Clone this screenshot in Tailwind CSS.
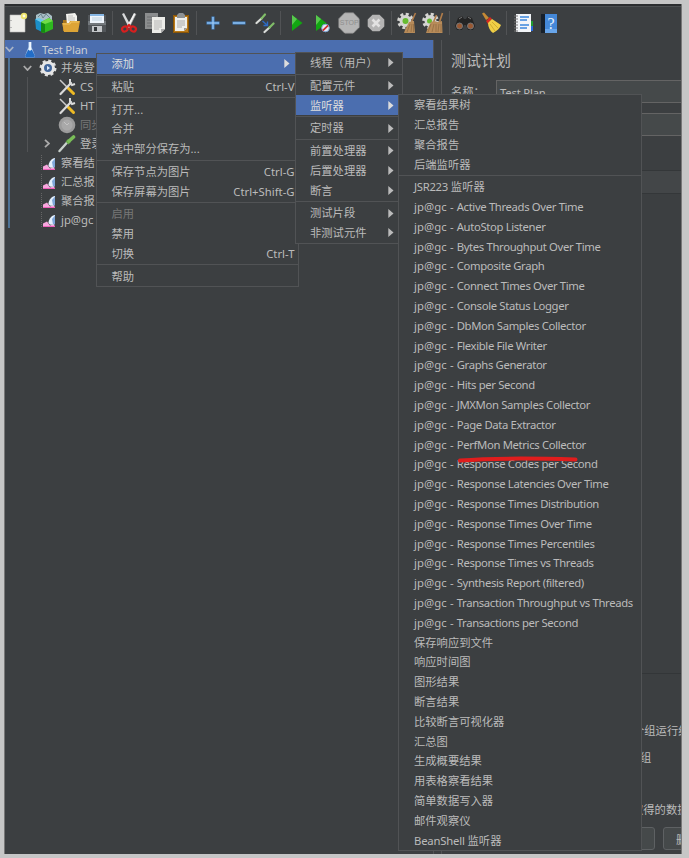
<!DOCTYPE html>
<html lang="zh-CN">
<head>
<meta charset="utf-8">
<title>Apache JMeter</title>
<script src="https://cdn.jsdelivr.net/npm/@tailwindcss/browser@4"></script>
</head>
<body class="bg-[#c6c6c6] w-[689px] h-[858px] overflow-hidden font-['Noto_Sans','Noto_Sans_CJK_SC',sans-serif] text-[11.3px] text-[#bbbbbb]">
<div class="relative w-[689px] h-[858px] pl-[4px] pt-[4px]">
  <div class="w-[678px] h-[850px] bg-[#3c3f41] border-l border-r border-[#777] flex flex-col overflow-hidden">
    <div class="h-[2px] bg-[#2c2e30] shrink-0"></div>
    <div class="h-px bg-[#4d5052] shrink-0"></div>
    <!-- toolbar -->
    <div id="toolbar" class="h-[33px] shrink-0 flex items-center pb-[2px]">
      <div class="w-[26.3px] shrink-0 flex justify-center"><svg width="20" height="22" viewBox="0 0 20 22"><path d="M2 3h15v17H2z" fill="#efefeb" stroke="#bbb" stroke-width=".6"/><circle cx="16" cy="4" r="3.2" fill="#ede36a"/><circle cx="16" cy="4" r="1.4" fill="#fffde0"/><path d="M3 8v1M3 15v1" stroke="#888"/></svg></div>
      <div class="w-[26.3px] shrink-0 flex justify-center"><svg width="20" height="22" viewBox="0 0 20 22"><path d="M2 3l4-2 4 1 4-1 4 3v6H2z" fill="#a9bfc6"/><path d="M4 5l3-3 2 4 3-4 4 4" stroke="#6d858e" fill="none"/><path d="M1 7l7 3v10l-6-3z" fill="#1b8fc8"/><path d="M1 7l4-1 6 3-3 2z" fill="#6ac8ec"/><path d="M7 10l8-4 4 3v8l-9 4-3-1z" fill="#2eb81f"/><path d="M7 10l4 2v9l-4-1z" fill="#148a12"/><path d="M11 12l8-3-4-3-8 4z" fill="#70dc48"/></svg></div>
      <div class="w-[26.3px] shrink-0 flex justify-center"><svg width="20" height="22" viewBox="0 0 20 22"><path d="M2 8h6l1 1h8v10H2z" fill="#a8751b"/><path d="M5 2l9-1 2 3v9H6z" fill="#f3f3ef"/><path d="M7 4h5M7 6h7M7 8h7" stroke="#aaa" stroke-width=".7"/><path d="M1 11h7l1-2h10l-2 11H3z" fill="#dda436"/><path d="M2 12h7l1-2h8" stroke="#f8ce70" fill="none" stroke-width=".8"/></svg></div>
      <div class="w-[26.3px] shrink-0 flex justify-center"><svg width="20" height="22" viewBox="0 0 20 22"><path d="M1 3h18v17H2l-1-1z" fill="#52565a"/><path d="M1 9h18v4H1z" fill="#74797d"/><path d="M3 2h14v9H3z" fill="#eef4fb"/><path d="M3 2h14v2H3z" fill="#86b6e4"/><path d="M5 6h10M5 8h10" stroke="#aac1d4" stroke-width=".7"/><path d="M5 14h10v6H5z" fill="#c4c7ca"/><path d="M7 15h3v4H7z" fill="#34383b"/></svg></div>
      <div class="w-[5.2px] h-[24px] shrink-0 flex justify-center"><div class="w-px bg-[#515355]"></div></div>
      <div class="w-[26.3px] shrink-0 flex justify-center"><svg width="20" height="22" viewBox="0 0 20 22"><path d="M3 2l2-1 7 13-2 2z" fill="#d7d9da"/><path d="M17 2l-2-1-7 13 2 2z" fill="#f1f1f1"/><path d="M17 2l-7 14" stroke="#999" stroke-width=".6"/><g fill="none" stroke="#d61f1f" stroke-width="2.2"><ellipse cx="5.8" cy="17" rx="2.8" ry="2.4" transform="rotate(-30 5.8 17)"/><ellipse cx="14.2" cy="17" rx="2.8" ry="2.4" transform="rotate(30 14.2 17)"/><path d="M8 15l2-2 2 2"/></g></svg></div>
      <div class="w-[26.3px] shrink-0 flex justify-center"><svg width="22" height="22" viewBox="0 0 22 22"><path d="M1 1h13v16H1z" fill="#8b8d8e"/><path d="M3 5h9M3 8h6M3 11h6M3 14h6" stroke="#6d6f70"/><path d="M8 5h13v12l-4 4H8z" fill="#ecece8"/><path d="M10 9h8M10 11h8M10 13h8M10 15h8M10 17h5" stroke="#aaa" stroke-width=".8"/><path d="M17 21v-4h4z" fill="#aaa"/></svg></div>
      <div class="w-[26.3px] shrink-0 flex justify-center"><svg width="20" height="22" viewBox="0 0 20 22"><path d="M2 3h16v18H2z" fill="#b87918"/><path d="M2.500 3.500h15v17h-15z" fill="none" stroke="#8a5506"/><path d="M4 5h12v11l-3 3H4z" fill="#efefeb"/><path d="M6 3l2-2h4l2 2v3H6z" fill="#8e9294"/><path d="M6 9h8M6 11h8M6 13h8M6 15h5" stroke="#999" stroke-width=".8"/><path d="M13 19v-3h3z" fill="#999"/></svg></div>
      <div class="w-[5.2px] h-[24px] shrink-0 flex justify-center"><div class="w-px bg-[#515355]"></div></div>
      <div class="w-[26.3px] shrink-0 flex justify-center"><svg width="14" height="14" viewBox="0 0 14 14"><path d="M7 .5v13M.5 7h13" stroke="#4488cf" stroke-width="3"/><path d="M7 1v12M1 7h12" stroke="#a8cff5" stroke-width="1.100"/></svg></div>
      <div class="w-[26.3px] shrink-0 flex justify-center"><svg width="14" height="14" viewBox="0 0 14 14"><path d="M.5 7h13" stroke="#4488cf" stroke-width="3"/><path d="M1 7h12" stroke="#a8cff5" stroke-width="1.100"/></svg></div>
      <div class="w-[26.3px] shrink-0 flex justify-center"><svg width="20" height="22" viewBox="0 0 20 22"><g stroke-width="2.200" stroke-linecap="round"><path d="M1.500 11l5-4.500" stroke="#d9dcd9"/><path d="M6.500 6.500l3.500-4" stroke="#80bd68"/><path d="M9.500 20l5-4.500" stroke="#d9dcd9"/><path d="M14.500 15.500l4-4" stroke="#80bd68"/></g><path d="M7.500 9l4.500 4M12.500 9.500v4h-4" fill="none" stroke="#2d6bc4" stroke-width="1.400"/></svg></div>
      <div class="w-[5.2px] h-[24px] shrink-0 flex justify-center"><div class="w-px bg-[#515355]"></div></div>
      <div class="w-[26.3px] shrink-0 flex justify-center"><svg width="12" height="18" viewBox="0 0 12 18"><path d="M1 1l10.500 8L1 17z" fill="#12a612"/><path d="M1 1l5 4-5 6z" fill="#58c84e"/></svg></div>
      <div class="w-[26.3px] shrink-0 flex justify-center"><svg width="15" height="20" viewBox="0 0 15 20"><path d="M1 2l11 8.500L1 18z" fill="#12a612"/><path d="M1 2l5 4-5 6z" fill="#58c84e"/><circle cx="10.500" cy="15" r="3.800" fill="#e4ebf5" stroke="#7ba3d4"/><path d="M7.800 17.600l5.300-5.200" stroke="#d02a2a" stroke-width="1.700"/></svg></div>
      <div class="w-[26.3px] shrink-0 flex justify-center"><div class="relative w-[22px] h-[22px] flex items-center justify-center"><svg class="absolute inset-0" width="22" height="22" viewBox="0 0 22 22"><path d="M6.700 1h8.600L21 6.700v8.600L15.300 21H6.700L1 15.300V6.700z" fill="#b5b5b5" stroke="#a2a2a2"/></svg><span class="relative font-['Liberation_Sans'] text-[7px] leading-none text-[#8e8e8e]">STOP</span></div></div>
      <div class="w-[26.3px] shrink-0 flex justify-center"><svg width="18" height="18" viewBox="0 0 18 18"><path d="M5.500.7h7l4.800 4.800v7l-4.800 4.800h-7L.7 12.500v-7z" fill="#b4b4b4"/><path d="M5.500 5.500l7 7M12.500 5.500l-7 7" stroke="#e2e2e2" stroke-width="2.600"/></svg></div>
      <div class="w-[5.2px] h-[24px] shrink-0 flex justify-center"><div class="w-px bg-[#515355]"></div></div>
      <div class="w-[26.3px] shrink-0 flex justify-center"><svg width="20" height="22" viewBox="0 0 20 22"><circle cx="8.500" cy="9" r="6.800" fill="none" stroke="#d5d5d2" stroke-width="3" stroke-dasharray="3 2.340"/><circle cx="8.500" cy="9" r="6" fill="#d5d5d2"/><circle cx="8.500" cy="9" r="3" fill="#67bb32"/><path d="M18.500 1l-4 9" stroke="#b07c4a" stroke-width="1.600"/><path d="M12 10l5-1 1 12H7l1-3z" fill="#b78b59"/><path d="M13 12l-3 8M15 12l-1 8M16.500 12v8" stroke="#8d683f" stroke-width=".7"/></svg></div>
      <div class="w-[26.3px] shrink-0 flex justify-center"><svg width="22" height="22" viewBox="0 0 22 22"><circle cx="8.500" cy="9" r="6.800" fill="none" stroke="#d5d5d2" stroke-width="3" stroke-dasharray="3 2.340"/><circle cx="8.500" cy="9" r="6" fill="#d5d5d2"/><circle cx="7.500" cy="9" r="2.500" fill="#67bb32"/><path d="M20.500 1l-3 9M14.500 3l-3 7" stroke="#b07c4a" stroke-width="1.600"/><path d="M9 10l3-1 4 1 4-1 .5 12H4l1-3z" fill="#b78b59"/><path d="M9 12l-3 8M12 12l-2 8M14 12v8M17 12l-1 8M19 12v8" stroke="#8d683f" stroke-width=".7"/></svg></div>
      <div class="w-[5.2px] h-[24px] shrink-0 flex justify-center"><div class="w-px bg-[#515355]"></div></div>
      <div class="w-[26.3px] shrink-0 flex justify-center"><svg width="22" height="18" viewBox="0 0 22 18"><path d="M4 4l4-2 2 3h2l2-3 4 2 3 8-2 4h-5l-2-5h-2l-2 5H3l-2-4z" fill="#242424"/><path d="M5 5l3-2M14 3l3 2" stroke="#777"/><circle cx="5.500" cy="12" r="3" fill="#9a5832" stroke="#777"/><circle cx="16.500" cy="12" r="3" fill="#9a5832" stroke="#777"/></svg></div>
      <div class="w-[26.3px] shrink-0 flex justify-center"><svg width="22" height="22" viewBox="0 0 22 22"><path d="M2 1.500l2-1L9 6 6 8z" fill="#c58a35"/><path d="M6 9l4-4 2 2-4 5z" fill="#d42a20"/><path d="M8 11l4-4c3 2 6 4 9 6-1 3-4 6-8 8-3-2-5-6-5-10z" fill="#f0cf46"/><path d="M10 12l5 7M12 10l6 6" stroke="#c8a52a" stroke-width=".8"/></svg></div>
      <div class="w-[5.2px] h-[24px] shrink-0 flex justify-center"><div class="w-px bg-[#515355]"></div></div>
      <div class="w-[26.3px] shrink-0 flex justify-center"><svg width="20" height="22" viewBox="0 0 20 22"><path d="M17 9h3v5h-3z" fill="#209a30"/><path d="M17 14h3v5h-3z" fill="#2a67d8"/><path d="M3 2h15v18H3z" fill="#f2f5f8"/><path d="M7 5h9M7 8h7M7 13h9M7 16h7" stroke="#3b86dc" stroke-width="1.300"/><path d="M1 4h4M1 7h4M1 10h4M1 13h4M1 16h4M1 19h4" stroke="#777" stroke-width="1.200"/></svg></div>
      <div class="w-[26.3px] shrink-0 flex justify-center"><svg width="18" height="22" viewBox="0 0 18 22"><path d="M1 2h16v19H1z" fill="#4488d8"/><path d="M1 2h4v19H1z" fill="#17202b"/><path d="M5 17h12v4H5z" fill="#68a5ea"/><text x="11" y="16.500" text-anchor="middle" font-family="Liberation Serif, serif" font-size="16" fill="#e8f1fc">?</text></svg></div>
    </div>
    <!-- split pane -->
    <div class="flex flex-1 min-h-0">
      <div class="w-[428px] shrink-0 relative">
        <div class="h-[18px] bg-[#4b6eaf] flex items-center">
          <svg class="w-[9px] shrink-0" height="6" viewBox="0 0 9 6"><path d="M.8 1l3.700 4 3.700-4" fill="none" stroke="#a9b4c6" stroke-width="1.800"/></svg>
          <svg class="ml-[9px] w-[14px] shrink-0" height="17" viewBox="0 0 14 17"><path d="M5.500 1h3v5l3.500 9c0 1-1 1.500-2 1.500H4c-1 0-2-.5-2-1.500l3.500-9z" fill="#b9d3ee"/><path d="M5 9h4l3 6-1 1.500H3L2 15z" fill="#226dc8"/><path d="M6.300 1h1.700v8.500H6z" fill="#f0f7ff"/></svg>
          <span class="ml-[5px] pt-[2px] text-[11.3px] tracking-[-0.2px] text-[#c8cdd6]">Test Plan</span>
        </div>
        <div class="h-[19px] flex items-center pl-[18px]">
          <svg class="w-[9px] shrink-0" height="6" viewBox="0 0 9 6"><path d="M.8 1l3.700 4 3.700-4" fill="none" stroke="#aaa" stroke-width="1.800"/></svg>
          <svg class="ml-[7px] w-[18px] shrink-0" height="18" viewBox="0 0 18 18"><circle cx="9" cy="9" r="7.200" fill="none" stroke="#dedede" stroke-width="2.600" stroke-dasharray="3 2.650"/><circle cx="9" cy="9" r="5.500" fill="#41669b" stroke="#e6e6e6" stroke-width="3"/><path d="M8 6.800l3 2.200-3 2.200z" fill="#dbe8fa"/></svg>
          <span class="ml-[4px] pt-[2px]">并发登</span>
        </div>
        <div class="h-[19px] flex items-center pl-[53px]"><svg class="w-[18px] shrink-0" height="18" viewBox="0 0 18 18"><path d="M2 2l7 7" stroke="#ccc" stroke-width="1.500"/><path d="M9.500 9.500l6 6" stroke="#edba25" stroke-width="3" stroke-linecap="round"/><path d="M2.500 16L13 5" stroke="#dadada" stroke-width="2.200" stroke-linecap="round"/><path d="M12 1v4l2 2 3-1" fill="none" stroke="#dadada" stroke-width="2"/></svg><span class="ml-[4px] pt-[2px]">CS</span></div>
        <div class="h-[19px] flex items-center pl-[53px]"><svg class="w-[18px] shrink-0" height="18" viewBox="0 0 18 18"><path d="M2 2l7 7" stroke="#ccc" stroke-width="1.500"/><path d="M9.500 9.500l6 6" stroke="#edba25" stroke-width="3" stroke-linecap="round"/><path d="M2.500 16L13 5" stroke="#dadada" stroke-width="2.200" stroke-linecap="round"/><path d="M12 1v4l2 2 3-1" fill="none" stroke="#dadada" stroke-width="2"/></svg><span class="ml-[4px] pt-[2px]">HT</span></div>
        <div class="h-[19px] flex items-center pl-[53px]"><svg class="w-[18px] shrink-0" height="18" viewBox="0 0 18 18"><circle cx="9" cy="9" r="8.300" fill="#9b9b9b"/><circle cx="9" cy="9" r="5.500" fill="#a9a9a9"/><path d="M6 6l3 3 2-2" fill="none" stroke="#c4c4c4" stroke-width="1"/></svg><span class="ml-[4px] pt-[2px] text-[#777]">同步</span></div>
        <div class="h-[19px] flex items-center pl-[39px]"><svg class="w-[6px] shrink-0" height="9" viewBox="0 0 6 9"><path d="M1 .8l4 3.700-4 3.700" fill="none" stroke="#aaa" stroke-width="1.800"/></svg><svg class="ml-[8px] w-[18px] shrink-0" height="18" viewBox="0 0 18 18"><path d="M1.500 16l8-9" stroke="#c8d0cb" stroke-width="2.400" stroke-linecap="round"/><path d="M9 8l2.500-2.500" stroke="#63a446" stroke-width="4"/><path d="M11 6l4.500-4" stroke="#79bd58" stroke-width="3.600" stroke-linecap="round"/></svg><span class="ml-[4px] pt-[2px]">登录</span></div>
        <div class="h-[19px] flex items-center pl-[36px]"><div class="w-px h-[15px] border-l border-dotted border-[#666]"></div><svg class="mt-[2px] w-[14px] shrink-0" height="14" viewBox="0 0 14 14"><path d="M1 13V9.500l4-2 3 4 4-1.500 1 3z" fill="#f7a6dd"/><path d="M1 12.500h12" stroke="#ee5fbb"/><path d="M6.500 8.500C7 4.500 9.500 1.500 13 1v9c-3 1.500-6 1-6.500-1.500z" fill="#e4effc"/><path d="M10 5l3-3.500v8.500l-2 .5z" fill="#7ea6da"/></svg><span class="ml-[5px] pt-[2px]">察看结</span></div>
        <div class="h-[19px] flex items-center pl-[36px]"><div class="w-px h-[15px] border-l border-dotted border-[#666]"></div><svg class="mt-[2px] w-[14px] shrink-0" height="14" viewBox="0 0 14 14"><path d="M1 13V9.500l4-2 3 4 4-1.500 1 3z" fill="#f7a6dd"/><path d="M1 12.500h12" stroke="#ee5fbb"/><path d="M6.500 8.500C7 4.500 9.500 1.500 13 1v9c-3 1.500-6 1-6.500-1.500z" fill="#e4effc"/><path d="M10 5l3-3.500v8.500l-2 .5z" fill="#7ea6da"/></svg><span class="ml-[5px] pt-[2px]">汇总报</span></div>
        <div class="h-[19px] flex items-center pl-[36px]"><div class="w-px h-[15px] border-l border-dotted border-[#666]"></div><svg class="mt-[2px] w-[14px] shrink-0" height="14" viewBox="0 0 14 14"><path d="M1 13V9.500l4-2 3 4 4-1.500 1 3z" fill="#f7a6dd"/><path d="M1 12.500h12" stroke="#ee5fbb"/><path d="M6.500 8.500C7 4.500 9.500 1.500 13 1v9c-3 1.500-6 1-6.500-1.500z" fill="#e4effc"/><path d="M10 5l3-3.500v8.500l-2 .5z" fill="#7ea6da"/></svg><span class="ml-[5px] pt-[2px]">聚合报</span></div>
        <div class="h-[19px] flex items-center pl-[36px]"><div class="w-px h-[15px] border-l border-dotted border-[#666]"></div><svg class="mt-[2px] w-[14px] shrink-0" height="14" viewBox="0 0 14 14"><path d="M1 13V9.500l4-2 3 4 4-1.500 1 3z" fill="#f7a6dd"/><path d="M1 12.500h12" stroke="#ee5fbb"/><path d="M6.500 8.500C7 4.500 9.500 1.500 13 1v9c-3 1.500-6 1-6.500-1.500z" fill="#e4effc"/><path d="M10 5l3-3.500v8.500l-2 .5z" fill="#7ea6da"/></svg><span class="ml-[5px] pt-[2px]">jp@gc</span></div>
        <div class="absolute left-[3px] top-[18px] w-[2px] h-[170px] bg-[#4e7396]"></div>
        <div class="absolute left-[22px] top-[37px] w-px h-[75px] bg-[#515355]"></div>
      </div>
      <div class="w-[9px] shrink-0 border-l border-r border-[#515355]"></div>
      <!-- test plan panel -->
      <div class="flex-1 min-w-0 flex flex-col overflow-hidden whitespace-nowrap">
        <div class="h-[40px] shrink-0 flex items-center pl-[9px] text-[15px]">测试计划</div>
        <div class="h-[23px] shrink-0 flex items-center">
          <div class="w-[54px] shrink-0 pl-[9px] pt-[2px]">名称：</div>
          <div class="flex-1 h-[23px] bg-[#45494a] border border-r-0 border-[#646464] pl-[3px] leading-[23px] tracking-[-0.2px]">Test Plan</div>
        </div>
        <div class="mt-[10px] h-[23px] shrink-0 flex items-center">
          <div class="w-[54px] shrink-0"></div>
          <div class="flex-1 h-[23px] bg-[#45494a] border border-r-0 border-[#646464]"></div>
        </div>
        <div class="mt-[34px] h-[24px] shrink-0 bg-[#434648] border-t border-b border-[#343739]"></div>
        <div class="mt-[479px] h-px shrink-0 bg-[#333638]"></div>
        <div class="mt-[48px] h-[18px] shrink-0 pl-[191px] leading-[18px]">个组运行结</div>
        <div class="mt-[9px] h-[18px] shrink-0 pl-[198px] leading-[18px]">组</div>
        <div class="mt-[34px] h-[18px] shrink-0 pl-[190px] leading-[18px]">取得的数据</div>
        <div class="mt-[8px] flex shrink-0 gap-[8px] pl-[150px]">
          <div class="w-[63px] h-[23px] shrink-0 border border-[#5e6163] bg-[#45494a] rounded-[3px]"></div>
          <div class="w-[63px] h-[23px] shrink-0 border border-[#5e6163] bg-[#45494a] rounded-[3px] pl-[12px] leading-[23px]">删</div>
        </div>
      </div>
    </div>
  </div>
  <!-- popup menus -->
  <div id="edit" class="absolute left-[96px] top-[53px] w-[203px] bg-[#3c3f41] border border-[#515355] whitespace-nowrap"></div>
  <div id="add" class="absolute left-[295px] top-[52px] w-[108px] bg-[#3c3f41] border border-[#515355] whitespace-nowrap"></div>
  <div id="listener" class="absolute left-[398px] top-[94px] w-[244px] bg-[#3c3f41] border border-[#515355] whitespace-nowrap"></div>
  <svg class="absolute left-[456px] top-[454px]" width="124" height="12" viewBox="0 0 124 12"><path d="M4 6.500C30 4.500 70 4 119.500 5.500" fill="none" stroke="#e01d1d" stroke-width="4" stroke-linecap="round"/></svg>
</div>
<script>
const SEP = '<div class="h-[2.9px] flex flex-col justify-center"><div class="h-px bg-[#515355]"></div></div>';
const ARROW = '<svg class="shrink-0" width="6" height="9" viewBox="0 0 6 9"><path d="M.3 0l5.200 4.500L.3 9z" fill="currentColor"/></svg>';
function fill(id, items, cls) {
  document.getElementById(id).innerHTML = items.map(it => {
    if (it === '-') return SEP;
    const [label, right = '', state = ''] = [].concat(it);
    const color = state === 'on' ? 'bg-[#4b6eaf] text-[#dddddd]' : state === 'off' ? 'text-[#777777]' : '';
    return `<div class="h-[19.8px] flex items-center justify-between ${cls} ${color}"><span class="pt-[1.6px]">${label}</span>${right === '>' ? ARROW : `<span class="pt-[1.6px]">${right}</span>`}</div>`;
  }).join('');
}
fill('edit', [['添加', '>', 'on'], '-', ['粘贴', 'Ctrl-V'], '-', '打开...', '合并', '选中部分保存为...', '-',
  ['保存节点为图片', 'Ctrl-G'], ['保存屏幕为图片', 'Ctrl+Shift-G'], '-', ['启用', '', 'off'], '禁用', ['切换', 'Ctrl-T'], '-', '帮助'], 'pl-[14.5px] pr-[3.5px]');
document.querySelector('#edit svg').classList.add('mr-[5px]');
fill('add', [['线程（用户）', '>'], '-', ['配置元件', '>'], ['监听器', '>', 'on'], '-', ['定时器', '>'], '-',
  ['前置处理器', '>'], ['后置处理器', '>'], ['断言', '>'], '-', ['测试片段', '>'], ['非测试元件', '>']], 'pl-[14px] pr-[8px]');
fill('listener', ['察看结果树', '汇总报告', '聚合报告', '后端监听器', '-', '<span class="tracking-[-0.3px]">JSR223</span> 监听器',
  ...['Active Threads Over Time', 'AutoStop Listener', 'Bytes Throughput Over Time', 'Composite Graph', 'Connect Times Over Time',
  'Console Status Logger', 'DbMon Samples Collector', 'Flexible File Writer', 'Graphs Generator', 'Hits per Second',
  'JMXMon Samples Collector', 'Page Data Extractor', 'PerfMon Metrics Collector', 'Response Codes per Second',
  'Response Latencies Over Time', 'Response Times Distribution', 'Response Times Over Time', 'Response Times Percentiles',
  'Response Times vs Threads', 'Synthesis Report (filtered)', 'Transaction Throughput vs Threads', 'Transactions per Second'].map(s => '<span class="tracking-[0.1px]">jp@gc - </span><span class="tracking-[-0.35px]">' + s + '</span>'),
  '保存响应到文件', '响应时间图', '图形结果', '断言结果', '比较断言可视化器', '汇总图', '生成概要结果', '用表格察看结果',
  '简单数据写入器', '邮件观察仪', '<span class="tracking-[-0.2px]">BeanShell</span> 监听器'], 'pl-[15px]');
</script>
</body>
</html>
